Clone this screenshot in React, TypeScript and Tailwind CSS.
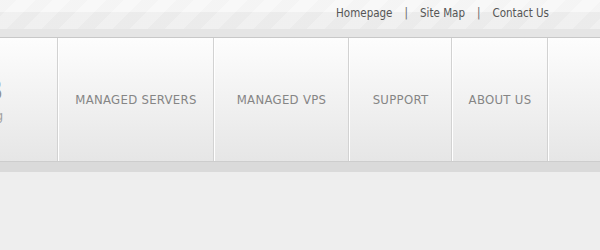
const navItems = [
  { label: "MANAGED SERVERS", width: "w-[154px]" },
  { label: "MANAGED VPS", width: "w-[133px]" },
  { label: "SUPPORT", width: "w-[101px]" },
  { label: "ABOUT US", width: "w-[94px]" },
];

export default function App() {
  return (
    <div className="min-h-[250px] bg-[#eeeeee] font-['DejaVu_Sans',sans-serif]">
      {/* Top strip with diagonal stripes */}
      <div className="h-[29px] bg-[repeating-linear-gradient(135deg,#f1f1f1_0px,#f1f1f1_12px,#f6f6f6_12px,#f6f6f6_25px)]">
        <div className="h-full bg-[linear-gradient(to_bottom,rgba(255,255,255,0.25)_0px,rgba(255,255,255,0.25)_12px,rgba(0,0,0,0.025)_12px,rgba(0,0,0,0.025)_29px)] flex items-center justify-end pr-[51px] pb-[2px]">
          <div className="flex items-center gap-[12px] text-[11.5px] text-[#555] font-['DejaVu_Sans_Condensed',sans-serif]">
            <a href="#">Homepage</a>
            <span className="text-[#666]">|</span>
            <a href="#">Site Map</a>
            <span className="text-[#666]">|</span>
            <a href="#">Contact Us</a>
          </div>
        </div>
      </div>
      <div className="h-[9px] bg-[#e5e5e5] border-b border-[#c8c8c8]" />

      {/* Main navigation */}
      <div className="h-[124px] flex border-b border-[#cdcdcd] bg-[linear-gradient(to_bottom,#fdfdfd,#e6e6e6)]">
        <div className="w-[57px] overflow-hidden flex items-center">
          <div className="w-[3px] flex justify-end">
            <div className="flex flex-col items-end whitespace-nowrap text-[#8f8f8f] leading-none">
              <span className="text-[28px] font-bold">WEB</span>
              <span className="text-[12px] mt-[5px] text-[#a0a0a0]">hosting</span>
            </div>
          </div>
        </div>
        <div className="w-px bg-[#d2d2d2]" />
        {navItems.map((item) => (
          <div key={item.label} className="flex">
            <div className="w-px bg-white" />
            <a
              href="#"
              className={`${item.width} flex items-center justify-center text-[13px] text-[#858585] font-['DejaVu_Sans_Condensed',sans-serif] tracking-[0.3px]`}
            >
              {item.label}
            </a>
            <div className="w-px bg-[#d2d2d2]" />
          </div>
        ))}
        <div className="w-px bg-white" />
        <div className="flex-1" />
      </div>
      <div className="h-[10px] bg-[#dadada]" />
    </div>
  );
}
